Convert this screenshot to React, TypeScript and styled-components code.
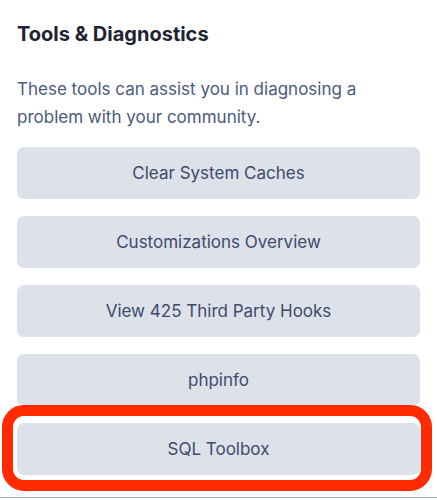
import { createGlobalStyle, styled } from "styled-components";

const GlobalStyle = createGlobalStyle`
  html, body {
    margin: 0;
    padding: 0;
    background: #ffffff;
  }
  body {
    font-family: Inter, "Noto Sans", "Liberation Sans", sans-serif;
    -webkit-font-smoothing: antialiased;
  }
`;

const Panel = styled.section`
  box-sizing: border-box;
  width: 437px;
  height: 498px;
  padding: 22px 17px 0;
  border-bottom: 1px solid #a9b0c0;
  overflow: hidden;
`;

const Title = styled.h2`
  margin: 0;
  font-size: 20px;
  line-height: 24px;
  font-weight: 700;
  color: #1d2330;
`;

const Description = styled.p`
  margin: 29px 0 0;
  font-size: 17px;
  line-height: 28px;
  color: #4b5a80;
`;

const ToolList = styled.div`
  display: flex;
  flex-direction: column;
  gap: 17px;
  margin-top: 16px;
`;

const ToolItem = styled.div`
  position: relative;
`;

const ToolButton = styled.button`
  display: flex;
  align-items: center;
  justify-content: center;
  width: 100%;
  height: 52px;
  border: none;
  border-radius: 7px;
  background: #dde1ea;
  color: #3e4b6b;
  font-family: inherit;
  font-size: 17px;
  cursor: pointer;
`;

const Highlight = styled.span`
  position: absolute;
  top: -18px;
  right: -12px;
  bottom: -16px;
  left: -15px;
  border: 11px solid #ff2a00;
  border-radius: 22px;
  pointer-events: none;
`;

type Tool = {
  label: string;
  highlighted?: boolean;
};

const tools: Tool[] = [
  { label: "Clear System Caches" },
  { label: "Customizations Overview" },
  { label: "View 425 Third Party Hooks" },
  { label: "phpinfo" },
  { label: "SQL Toolbox", highlighted: true },
];

const App = () => {
  return (
    <>
      <GlobalStyle />
      <Panel>
        <Title>Tools &amp; Diagnostics</Title>
        <Description>
          These tools can assist you in diagnosing a problem with your
          community.
        </Description>
        <ToolList>
          {tools.map((tool) => (
            <ToolItem key={tool.label}>
              <ToolButton type="button">{tool.label}</ToolButton>
              {tool.highlighted && <Highlight />}
            </ToolItem>
          ))}
        </ToolList>
      </Panel>
    </>
  );
};

export default App;
